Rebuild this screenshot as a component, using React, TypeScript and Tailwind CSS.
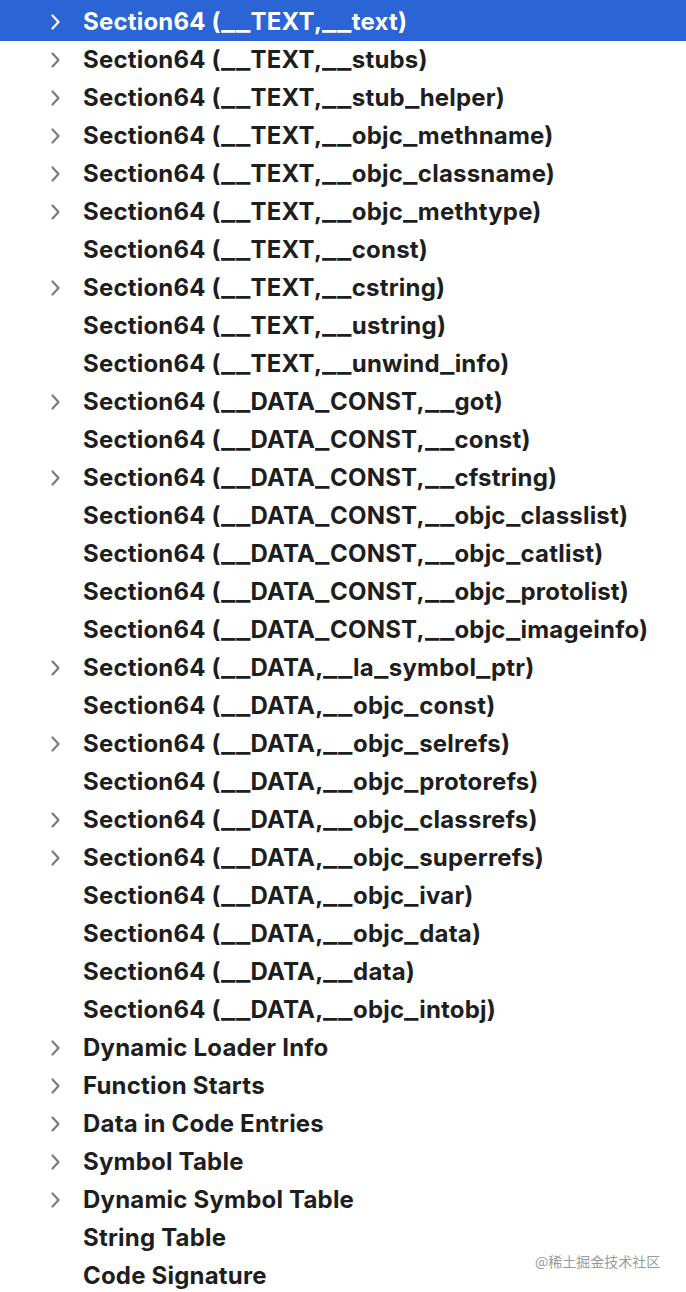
import React from "react";

const rows: [string, boolean][] = [
  ["Section64 (__TEXT,__text)", true],
  ["Section64 (__TEXT,__stubs)", true],
  ["Section64 (__TEXT,__stub_helper)", true],
  ["Section64 (__TEXT,__objc_methname)", true],
  ["Section64 (__TEXT,__objc_classname)", true],
  ["Section64 (__TEXT,__objc_methtype)", true],
  ["Section64 (__TEXT,__const)", false],
  ["Section64 (__TEXT,__cstring)", true],
  ["Section64 (__TEXT,__ustring)", false],
  ["Section64 (__TEXT,__unwind_info)", false],
  ["Section64 (__DATA_CONST,__got)", true],
  ["Section64 (__DATA_CONST,__const)", false],
  ["Section64 (__DATA_CONST,__cfstring)", true],
  ["Section64 (__DATA_CONST,__objc_classlist)", false],
  ["Section64 (__DATA_CONST,__objc_catlist)", false],
  ["Section64 (__DATA_CONST,__objc_protolist)", false],
  ["Section64 (__DATA_CONST,__objc_imageinfo)", false],
  ["Section64 (__DATA,__la_symbol_ptr)", true],
  ["Section64 (__DATA,__objc_const)", false],
  ["Section64 (__DATA,__objc_selrefs)", true],
  ["Section64 (__DATA,__objc_protorefs)", false],
  ["Section64 (__DATA,__objc_classrefs)", true],
  ["Section64 (__DATA,__objc_superrefs)", true],
  ["Section64 (__DATA,__objc_ivar)", false],
  ["Section64 (__DATA,__objc_data)", false],
  ["Section64 (__DATA,__data)", false],
  ["Section64 (__DATA,__objc_intobj)", false],
  ["Dynamic Loader Info", true],
  ["Function Starts", true],
  ["Data in Code Entries", true],
  ["Symbol Table", true],
  ["Dynamic Symbol Table", true],
  ["String Table", false],
  ["Code Signature", false],
];

function Chevron({ selected }: { selected: boolean }) {
  return (
    <svg width="11" height="18" viewBox="0 0 11 18" fill="none">
      <path
        d="M2.5 2.5 L8.5 9 L2.5 15.5"
        stroke={selected ? "#ffffff" : "#7b7b7b"}
        strokeWidth="2.2"
        strokeLinecap="round"
        strokeLinejoin="round"
      />
    </svg>
  );
}

function Label({ text }: { text: string }) {
  const parts = text.split(/(_+)/);
  return (
    <>
      {parts.map((p, i) =>
        p.startsWith("_") ? (
          <span
            key={i}
            className={`inline-block origin-left scale-x-[1.26] tracking-[0.4px] ${
              p.length > 1 ? "mr-[6px]" : "mr-[3px]"
            }`}
          >
            {p}
          </span>
        ) : (
          <span key={i}>{p}</span>
        )
      )}
    </>
  );
}

export default function App() {
  return (
    <div
      className="relative w-[686px] h-[1292px] bg-white overflow-hidden"
      style={{ fontFamily: "Inter, 'Noto Sans', sans-serif" }}
    >
      <div className="flex flex-col">
        {rows.map(([label, hasChevron], i) => {
          const selected = i === 0;
          return (
            <div
              key={i}
              className={`flex items-center ${
                selected ? "bg-[#2b64d5] h-[41px] pt-[2px]" : "h-[38px]"
              }`}
            >
              <div className="w-[83px] pl-[50px] flex items-center">
                {hasChevron && <Chevron selected={selected} />}
              </div>
              <span
                className={`text-[24px] font-bold tracking-[0.2px] leading-none whitespace-pre ${
                  selected ? "text-white" : "text-[#1e1e1e]"
                }`}
              >
                <Label text={label} />
              </span>
            </div>
          );
        })}
      </div>
      <div
        className="absolute left-[535px] top-[1251px] text-[14px] text-[#9a9a9a]"
        style={{ fontFamily: "'Noto Sans CJK SC', sans-serif" }}
      >
        @稀土掘金技术社区
      </div>
    </div>
  );
}
